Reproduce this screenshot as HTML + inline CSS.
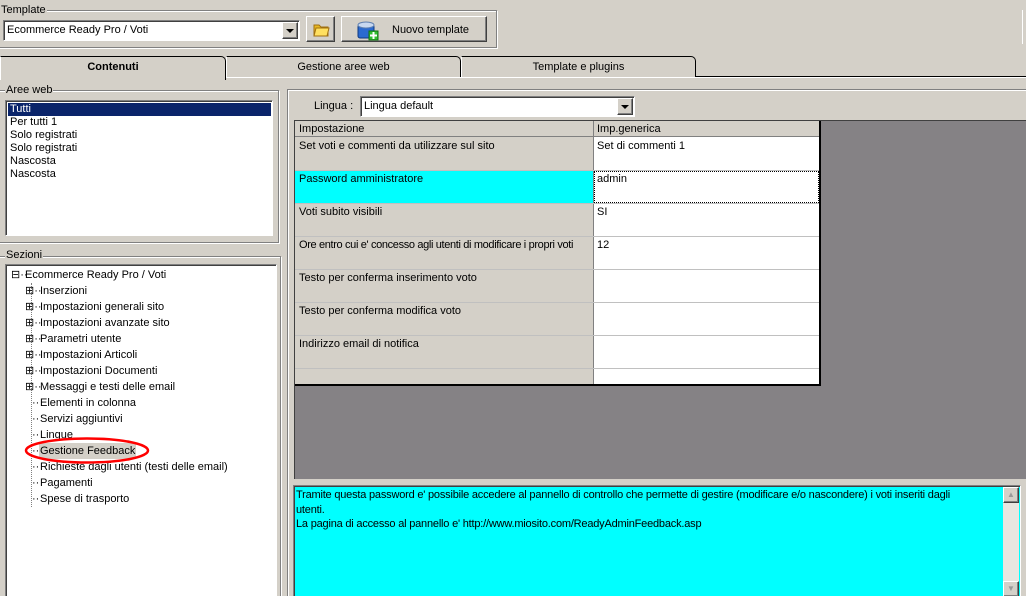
<!DOCTYPE html>
<html><head><meta charset="utf-8"><style>
*{box-sizing:border-box;margin:0;padding:0}
html,body{width:1026px;height:596px;overflow:hidden}
body{background:#d4d0c8;font:11px "Liberation Sans",Arial,sans-serif;color:#000;position:relative}
.a{position:absolute}
.sunk{border:1px solid;border-color:#808080 #fff #fff #808080;box-shadow:inset 1px 1px 0 #404040}
.grp{border:1px solid #808080;box-shadow:1px 1px 0 #fff, inset 1px 1px 0 #fff}
.lbl{background:#d4d0c8;padding:0 1px}
.btn{background:#d4d0c8;border:1px solid;border-color:#fff #404040 #404040 #fff;box-shadow:inset -1px -1px 0 #808080}
.dd{background:#d4d0c8;border:1px solid;border-color:#fff #404040 #404040 #fff;box-shadow:inset -1px -1px 0 #808080;width:16px}
.dd:after{content:"";position:absolute;left:3px;top:6px;border:4px solid transparent;border-top:4px solid #000;border-bottom:0}
.tab{border:1px solid #000;border-bottom:none;border-radius:0 5px 0 0;background:#d4d0c8;text-align:center;line-height:21px;border-left-color:#fff}
.tree div{position:absolute;white-space:nowrap;line-height:16px}
.grid div{position:absolute}
</style></head><body>
<div class="a grp" style="left:-2px;top:10px;width:499px;height:38px"></div>
<div class="a lbl" style="left:0;top:4px">Template</div>
<div class="a sunk" style="left:3px;top:20px;width:297px;height:21px;background:#fff"><span class="a" style="left:3px;top:3px">Ecommerce Ready Pro / Voti</span><div class="a dd" style="right:1px;top:1px;height:17px"></div></div>
<div class="a btn" style="left:306px;top:16px;width:29px;height:26px">
<svg class="a" style="left:5px;top:4px" width="18" height="16"><path d="M2 4h5l2 2h7v9H2z" fill="#e8b820" stroke="#a07010"/><path d="M4 7h13l-2 8H2z" fill="#ffe060" stroke="#a07010"/></svg></div>
<div class="a btn" style="left:341px;top:16px;width:146px;height:26px">
<svg class="a" style="left:14px;top:2px" width="24" height="22"><rect x="2" y="6" width="16" height="13" rx="2" fill="#2a6ad0" stroke="#103a80"/><ellipse cx="10" cy="6" rx="8" ry="3" fill="#c8d8f0" stroke="#6080b0"/><rect x="13" y="12" width="9" height="9" fill="#30c030" stroke="#107010"/><path d="M17.5 13v7M14 16.5h7" stroke="#fff" stroke-width="2"/></svg>
<span class="a" style="left:50px;top:7px">Nuovo template</span></div>
<div class="a" style="left:1022px;top:10px;width:1px;height:34px;background:#fff"></div>
<div class="a" style="left:224px;top:76px;width:802px;height:1px;background:#000"></div>
<div class="a" style="left:0;top:77px;width:1026px;height:1px;background:#fff"></div>
<div class="a tab" style="left:226px;top:56px;width:235px;height:21px">Gestione aree web</div>
<div class="a tab" style="left:461px;top:56px;width:235px;height:21px">Template e plugins</div>
<div class="a tab" style="left:0;top:56px;width:226px;height:24px;font-weight:bold;z-index:2">Contenuti</div>
<div class="a grp" style="left:-2px;top:90px;width:281px;height:153px"></div>
<div class="a lbl" style="left:5px;top:84px">Aree web</div>
<div class="a sunk" style="left:5px;top:100px;width:268px;height:136px;background:#fff">
<div class="a" style="left:2px;top:2px;width:263px;height:13px;background:#0a246a;color:#fff;padding-left:2px;line-height:13px">Tutti</div>
<div class="a" style="left:4px;top:15px;line-height:13px">Per tutti 1<br>Solo registrati<br>Solo registrati<br>Nascosta<br>Nascosta</div>
</div>
<div class="a grp" style="left:-2px;top:256px;width:283px;height:350px"></div>
<div class="a lbl" style="left:5px;top:249px">Sezioni</div>
<div class="a sunk tree" style="left:5px;top:264px;width:272px;height:340px;background:#fff">
<div style="left:25px;top:18px;height:224px;border-left:1px dotted #808080"></div>
<div style="left:5px;top:2px">⊟··</div><div style="left:19px;top:2px">Ecommerce Ready Pro / Voti</div>
<div style="left:19px;top:18px">⊞··</div><div style="left:34px;top:18px">Inserzioni</div>
<div style="left:19px;top:34px">⊞··</div><div style="left:34px;top:34px">Impostazioni generali sito</div>
<div style="left:19px;top:50px">⊞··</div><div style="left:34px;top:50px">Impostazioni avanzate sito</div>
<div style="left:19px;top:66px">⊞··</div><div style="left:34px;top:66px">Parametri utente</div>
<div style="left:19px;top:82px">⊞··</div><div style="left:34px;top:82px">Impostazioni Articoli</div>
<div style="left:19px;top:98px">⊞··</div><div style="left:34px;top:98px">Impostazioni Documenti</div>
<div style="left:19px;top:114px">⊞··</div><div style="left:34px;top:114px">Messaggi e testi delle email</div>
<div style="left:26px;top:130px">··</div><div style="left:34px;top:130px">Elementi in colonna</div>
<div style="left:26px;top:146px">··</div><div style="left:34px;top:146px">Servizi aggiuntivi</div>
<div style="left:26px;top:162px">··</div><div style="left:34px;top:162px">Lingue</div>
<div style="left:26px;top:178px">··</div><div style="left:33px;top:178px;background:#d4d0c8;padding:0 1px">Gestione Feedback</div>
<div style="left:26px;top:194px">··</div><div style="left:34px;top:194px">Richieste dagli utenti (testi delle email)</div>
<div style="left:26px;top:210px">··</div><div style="left:34px;top:210px">Pagamenti</div>
<div style="left:26px;top:226px">··</div><div style="left:34px;top:226px">Spese di trasporto</div>
</div>
<svg class="a" style="left:24px;top:436px" width="130" height="30"><ellipse cx="63" cy="14.5" rx="61" ry="12" fill="none" stroke="#f00" stroke-width="2.5"/></svg>
<div class="a" style="left:287px;top:89px;width:740px;height:507px;border-left:1px solid #808080;border-top:1px solid #808080;box-shadow:inset 1px 1px 0 #fff"></div>
<div class="a" style="left:314px;top:100px">Lingua :</div>
<div class="a sunk" style="left:360px;top:96px;width:275px;height:21px;background:#fff"><span class="a" style="left:3px;top:3px">Lingua default</span><div class="a dd" style="right:1px;top:1px;height:17px"></div></div>
<div class="a" style="left:294px;top:120px;width:732px;height:359px;background:#858285;border-left:1px solid #404040;border-top:1px solid #404040"></div>
<div class="a grid" style="left:295px;top:121px;width:526px;height:265px;background:#fff;border-right:2px solid #000;border-bottom:2px solid #000">
<div style="left:0;top:0;width:298px;height:263px;background:#d4d0c8"></div>
<div style="left:0;top:0;width:524px;height:16px;background:#d4d0c8;border-bottom:1px solid #808080"></div>
<div style="left:298px;top:0;width:1px;height:263px;background:#808080"></div>
<div style="left:0;top:49px;width:524px;height:1px;background:#c0c0c0"></div>
<div style="left:0;top:82px;width:524px;height:1px;background:#c0c0c0"></div>
<div style="left:0;top:115px;width:524px;height:1px;background:#c0c0c0"></div>
<div style="left:0;top:148px;width:524px;height:1px;background:#c0c0c0"></div>
<div style="left:0;top:181px;width:524px;height:1px;background:#c0c0c0"></div>
<div style="left:0;top:214px;width:524px;height:1px;background:#c0c0c0"></div>
<div style="left:0;top:247px;width:524px;height:1px;background:#c0c0c0"></div>
<div style="left:0;top:50px;width:298px;height:32px;background:#00ffff"></div>
<div style="left:299px;top:50px;width:225px;height:32px;border:1px dotted #000"></div>
<div style="left:4px;top:2px">Impostazione</div><div style="left:302px;top:2px">Imp.generica</div>
<div style="left:4px;top:19px">Set voti e commenti da utilizzare sul sito</div><div style="left:302px;top:19px">Set di commenti 1</div>
<div style="left:4px;top:52px">Password amministratore</div><div style="left:302px;top:52px">admin</div>
<div style="left:4px;top:85px">Voti subito visibili</div><div style="left:302px;top:85px">SI</div>
<div style="left:4px;top:118px;white-space:nowrap;letter-spacing:-0.35px">Ore entro cui e' concesso agli utenti di modificare i propri voti</div><div style="left:302px;top:118px">12</div>
<div style="left:4px;top:151px">Testo per conferma inserimento voto</div>
<div style="left:4px;top:184px">Testo per conferma modifica voto</div>
<div style="left:4px;top:217px">Indirizzo email di notifica</div>
</div>
<div class="a sunk" style="left:293px;top:485px;width:728px;height:115px;background:#00ffff">
<div class="a" style="left:2px;top:2px;width:700px;line-height:14.5px;letter-spacing:-0.2px">Tramite questa password e' possibile accedere al pannello di controllo che permette di gestire (modificare e/o nascondere) i voti inseriti dagli <br>utenti.<br>La pagina di accesso al pannello e' http://www.miosito.com/ReadyAdminFeedback.asp</div>
<div class="a" style="left:709px;top:1px;width:16px;height:112px;background:#e8e6e0"></div>
<div class="a btn" style="left:709px;top:1px;width:16px;height:16px;color:#999;font-size:8px;text-align:center;line-height:14px">▲</div>
<div class="a btn" style="left:709px;top:95px;width:16px;height:16px;color:#999;font-size:8px;text-align:center;line-height:14px">▼</div>
</div>
</body></html>
